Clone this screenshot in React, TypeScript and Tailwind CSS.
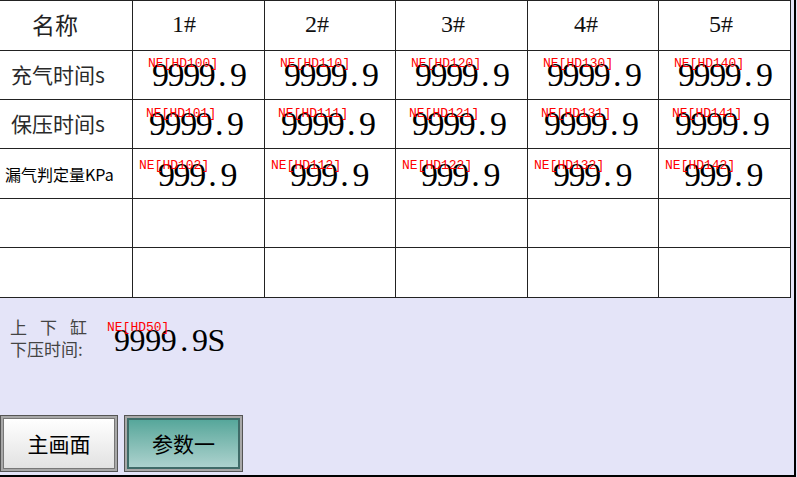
import React from 'react';

const serif = { fontFamily: '"Liberation Serif", "Noto Sans CJK SC", serif' };
const mono = { fontFamily: '"Liberation Mono", monospace' };
const cjk = { fontFamily: '"Noto Sans CJK SC", "Noto Sans", sans-serif' };

const colPad = ['pl-[39px]', 'pl-[40px]', 'pl-[45px]', 'pl-[46px]', 'pl-[50px]'];

interface DataRow {
  name: string;
  nameClass: string;
  value: string;
  base: number;
  labelClass: string;
  numClass: string;
}

const rows: DataRow[] = [
  {
    name: '充气时间s',
    nameClass: 'pl-[11px] text-[21px] text-[#2a2a2a]',
    value: '9999.9',
    base: 100,
    labelClass: 'left-[15px] top-[6px]',
    numClass: 'pl-[19px]',
  },
  {
    name: '保压时间s',
    nameClass: 'pl-[11px] text-[21px] text-[#2a2a2a]',
    value: '9999.9',
    base: 101,
    labelClass: 'left-[13px] top-[7px]',
    numClass: 'pl-[16px]',
  },
  {
    name: '漏气判定量KPa',
    nameClass: 'pl-[5px] text-[16px] text-black',
    value: '999.9',
    base: 102,
    labelClass: 'left-[6px] top-[10px]',
    numClass: 'pl-[25px] pt-[2px]',
  },
];

// fixed pitch digits, like the panel font
function Digits({ text, className = '' }: { text: string; className?: string }) {
  return (
    <span className={`flex leading-none text-black ${className}`} style={serif}>
      {text.split('').map((c, i) => (
        <span key={i} className="inline-block w-[15.6px] text-center">
          {c}
        </span>
      ))}
    </span>
  );
}

function Tag({ children, className }: { children: React.ReactNode; className: string }) {
  return (
    <span
      className={`absolute z-10 text-[13px] leading-none text-[#ff0000] ${className}`}
      style={mono}
    >
      {children}
    </span>
  );
}

export default function App() {
  return (
    <div className="w-[797px] h-[477px] bg-[#e4e4f8]">
      <div className="w-[796px] h-[477px] border-r-2 border-b-2 border-black flex flex-col">
        {/* table */}
        <div className="w-[791px] bg-white border-t border-[#222] grid grid-cols-[133px_132px_131px_132px_131px_132px] grid-rows-[50px_49px_49px_50px_49px_50px]">
          <div
            className="border-r border-b border-[#222] flex items-center pl-[32px] pb-[2px] text-[23px] text-[#222]"
            style={cjk}
          >
            名称
          </div>
          {[1, 2, 3, 4, 5].map((n, i) => (
            <div
              key={n}
              className={`border-r border-b border-[#222] flex items-center pb-[4px] text-[24px] text-[#111] ${colPad[i]}`}
              style={serif}
            >
              {n}#
            </div>
          ))}

          {rows.map((r) => (
            <React.Fragment key={r.name}>
              <div
                className={`border-r border-b border-[#222] flex items-center ${r.nameClass}`}
                style={cjk}
              >
                {r.name}
              </div>
              {[0, 1, 2, 3, 4].map((c) => (
                <div
                  key={c}
                  className={`relative border-r border-b border-[#222] flex items-center ${r.numClass}`}
                >
                  <Tag className={r.labelClass}>NE[HD{r.base + c * 10}]</Tag>
                  <Digits text={r.value} className="text-[34px]" />
                </div>
              ))}
            </React.Fragment>
          ))}

          {Array.from({ length: 12 }).map((_, i) => (
            <div key={i} className="border-r border-b border-[#222]" />
          ))}
        </div>

        {/* cylinder press time */}
        <div className="flex items-start pt-[18px] pl-[10px]">
          <div className="flex flex-col text-[17px] leading-[22px] text-[#444]" style={cjk}>
            <span className="tracking-[13px]">上下缸</span>
            <span>下压时间:</span>
          </div>
          <div className="relative pt-[8px] pl-[14px]">
            <Tag className="left-[7px] top-[5px]">NE[HD50]</Tag>
            <Digits text="9999.9S" className="text-[32px] text-[#111]" />
          </div>
        </div>

        {/* buttons */}
        <div className="mt-auto mb-[3px] flex gap-[6px]">
          <button
            className="w-[118px] h-[57px] border border-[#555] bg-[#a8a8a8] p-[2px]"
            style={cjk}
          >
            <div className="w-full h-full border border-[#777] bg-gradient-to-b from-white to-[#e2e2e2] flex items-center justify-center text-[21px] text-black">
              主画面
            </div>
          </button>
          <button
            className="w-[119px] h-[57px] border border-[#555] bg-[#a8a8a8] p-[2px]"
            style={cjk}
          >
            <div className="w-full h-full border-2 border-[#3f6b68] bg-gradient-to-b from-[#56a79b] to-[#acd2ce] flex items-center justify-center text-[21px] text-black">
              参数一
            </div>
          </button>
        </div>
      </div>
    </div>
  );
}
